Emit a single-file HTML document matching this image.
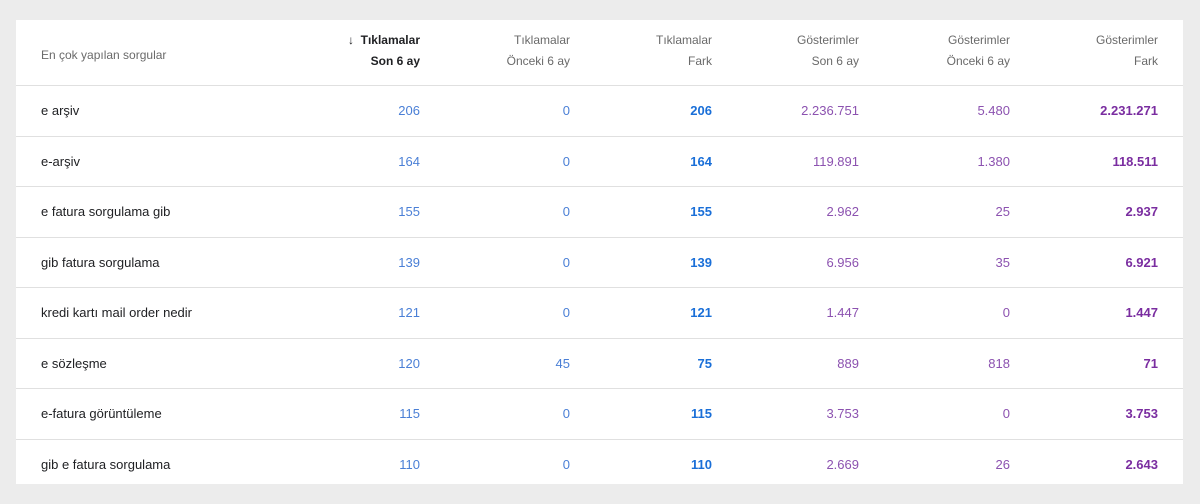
<!DOCTYPE html><html><head><style>
body{margin:0;width:1200px;height:504px;background:#ececec;font-family:"Liberation Sans",Arial,sans-serif;position:relative;overflow:hidden}
.card{position:absolute;left:16px;top:20px;width:1167px;height:464px;background:#fff}
.h{position:absolute;font-size:12px;color:#6a6a6a;text-align:right;line-height:21px}
.hb{color:#202124;font-weight:bold}
.row{position:absolute;left:0;width:1167px;border-top:1px solid #e0e0e0;height:50px}
.c{position:absolute;top:17px;font-size:13px;text-align:right;line-height:16px}
.q{left:25px;color:#202124;text-align:left}
.b{color:#4a7fd6}.bb{color:#1a6fd8;font-weight:bold}.p{color:#8c52b0}.pb{color:#7a2da0;font-weight:bold}
</style></head><body><div class="card">
<div class="h" style="left:25px;top:25px;text-align:left">En çok yapılan sorgular</div>
<div class="h hb" style="right:763px;top:10px">↓&nbsp; Tıklamalar<br>Son 6 ay</div>
<div class="h" style="right:613px;top:10px">Tıklamalar<br>Önceki 6 ay</div>
<div class="h" style="right:471px;top:10px">Tıklamalar<br>Fark</div>
<div class="h" style="right:324px;top:10px">Gösterimler<br>Son 6 ay</div>
<div class="h" style="right:173px;top:10px">Gösterimler<br>Önceki 6 ay</div>
<div class="h" style="right:25px;top:10px">Gösterimler<br>Fark</div>
<div id="rows"></div>
</div>
<script>
var d=[["e arşiv",206,0,206,"2.236.751","5.480","2.231.271"],["e-arşiv",164,0,164,"119.891","1.380","118.511"],["e fatura sorgulama gib",155,0,155,"2.962","25","2.937"],["gib fatura sorgulama",139,0,139,"6.956","35","6.921"],["kredi kartı mail order nedir",121,0,121,"1.447","0","1.447"],["e sözleşme",120,45,75,"889","818","71"],["e-fatura görüntüleme",115,0,115,"3.753","0","3.753"],["gib e fatura sorgulama",110,0,110,"2.669","26","2.643"]];
var r=[763,613,471,324,173,25],cl=["b","b","bb","p","p","pb"],h="";
d.forEach(function(x,i){h+='<div class="row" style="top:'+(65+i*50.5)+'px"><div class="c q">'+x[0]+'</div>';for(var j=0;j<6;j++)h+='<div class="c '+cl[j]+'" style="right:'+r[j]+'px">'+x[j+1]+'</div>';h+='</div>';});
document.getElementById("rows").outerHTML=h;
</script></body></html>
